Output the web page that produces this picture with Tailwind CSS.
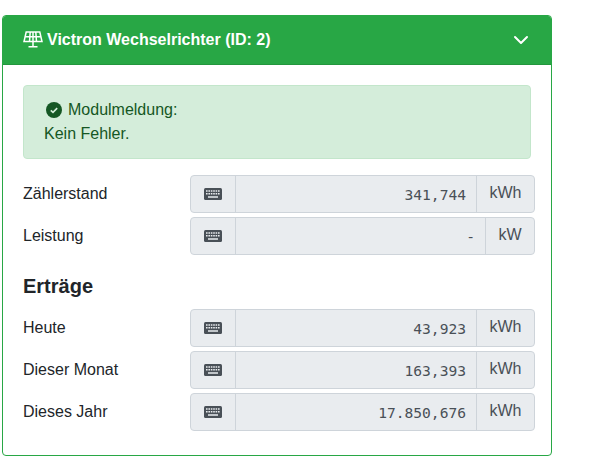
<!DOCTYPE html>
<html lang="de">
<head>
    <meta charset="UTF-8">
    <meta name="viewport" content="width=device-width, initial-scale=1.0">
    <title>Victron Wechselrichter</title>
    <script src="https://cdn.jsdelivr.net/npm/@tailwindcss/browser@4"></script>
</head>
<body class="bg-white font-['Liberation_Sans',Arial,sans-serif] text-[16px] leading-6 text-[#212529]">
    <div class="pt-[15px] pl-[2px]">
        <div class="w-[550px] h-[441px] rounded-[4px] border border-[#28a745] overflow-hidden">
            <!-- card header -->
            <div class="h-[50px] -mx-px -mt-px mb-0 bg-[#28a745] border-b border-[#23963d] flex items-center justify-between pl-[21px] pr-[23px] text-white font-bold">
                <div class="flex items-center gap-[4px]">
                    <svg class="w-[20px] h-[17px]" viewBox="0 0 20 17" fill="none" stroke="#fff" stroke-width="1.5">
                        <path d="M3.2 1h13.6l2.2 9.5H1z M2.2 5.7h15.6 M7.2 1l-.7 9.5 M12.8 1l.7 9.5 M10 1v14.5 M5.5 15.7h9" />
                    </svg>
                    <span>Victron Wechselrichter (ID: 2)</span>
                </div>
                <svg class="w-[16px] h-[16px]" viewBox="0 0 16 16" fill="none" stroke="#fff" stroke-width="2" stroke-linecap="round" stroke-linejoin="round">
                    <path d="M2 5l6 6 6-6" />
                </svg>
            </div>

            <!-- card body -->
            <div class="pt-[20px] pl-[20px] pr-[16px]">
                <div class="w-[508px] h-[74px] rounded-[4px] border border-[#c3e6cb] bg-[#d4edda] text-[#155724] pt-[12px] px-[20px] mb-[16px]">
                    <div class="flex items-center pl-[2px] gap-[6px]">
                        <svg class="w-[16px] h-[16px]" viewBox="0 0 16 16">
                            <circle cx="8" cy="8" r="8" fill="#155724" />
                            <path d="M4.8 8.3l2.2 2.1 4.2-4.3" fill="none" stroke="#d4edda" stroke-width="1.6" />
                        </svg>
                        <span>Modulmeldung:</span>
                    </div>
                    <div>Kein Fehler.</div>
                </div>

                <div class="flex flex-col gap-[4px]">
                    <div class="flex items-center h-[38px]">
                        <div class="w-[167px] pb-[1px]">Zählerstand</div>
                        <div class="w-[345px] h-[38px] flex rounded-[4px] border border-[#ced4da] bg-[#e9ecef] text-[#495057]">
                            <div class="w-[45px] border-r border-[#ced4da] flex items-center justify-center">
                                <svg class="w-[18px] h-[14px]" viewBox="0 0 18 14"><rect y="1" width="18" height="12" rx="1.5" fill="#495057" /><path d="M2 4h14M2 6.8h14" stroke="#e9ecef" stroke-width="1.5" stroke-dasharray="1.6 .8" /><path d="M4 10h10" stroke="#e9ecef" stroke-width="1.6" /></svg>
                            </div>
                            <div class="flex-1 flex items-center justify-end pr-[10px] pt-[2px] font-['DejaVu_Sans_Mono',monospace] text-[14.6px]">341,744</div>
                            <div class="w-[58px] border-l border-[#ced4da] flex items-center justify-center pb-[2px]">kWh</div>
                        </div>
                    </div>
                    <div class="flex items-center h-[38px]">
                        <div class="w-[167px] pb-[1px]">Leistung</div>
                        <div class="w-[345px] h-[38px] flex rounded-[4px] border border-[#ced4da] bg-[#e9ecef] text-[#495057]">
                            <div class="w-[45px] border-r border-[#ced4da] flex items-center justify-center">
                                <svg class="w-[18px] h-[14px]" viewBox="0 0 18 14"><rect y="1" width="18" height="12" rx="1.5" fill="#495057" /><path d="M2 4h14M2 6.8h14" stroke="#e9ecef" stroke-width="1.5" stroke-dasharray="1.6 .8" /><path d="M4 10h10" stroke="#e9ecef" stroke-width="1.6" /></svg>
                            </div>
                            <div class="flex-1 flex items-center justify-end pr-[10px] pt-[2px] font-['DejaVu_Sans_Mono',monospace] text-[14.6px]">-</div>
                            <div class="w-[49px] border-l border-[#ced4da] flex items-center justify-center pb-[2px]">kW</div>
                        </div>
                    </div>
                </div>

                <h3 class="mt-[19px] mb-[11px] text-[20px] leading-[24px] font-bold">Erträge</h3>

                <div class="flex flex-col gap-[4px]">
                    <div class="flex items-center h-[38px]">
                        <div class="w-[167px] pb-[1px]">Heute</div>
                        <div class="w-[345px] h-[38px] flex rounded-[4px] border border-[#ced4da] bg-[#e9ecef] text-[#495057]">
                            <div class="w-[45px] border-r border-[#ced4da] flex items-center justify-center">
                                <svg class="w-[18px] h-[14px]" viewBox="0 0 18 14"><rect y="1" width="18" height="12" rx="1.5" fill="#495057" /><path d="M2 4h14M2 6.8h14" stroke="#e9ecef" stroke-width="1.5" stroke-dasharray="1.6 .8" /><path d="M4 10h10" stroke="#e9ecef" stroke-width="1.6" /></svg>
                            </div>
                            <div class="flex-1 flex items-center justify-end pr-[10px] pt-[2px] font-['DejaVu_Sans_Mono',monospace] text-[14.6px]">43,923</div>
                            <div class="w-[58px] border-l border-[#ced4da] flex items-center justify-center pb-[2px]">kWh</div>
                        </div>
                    </div>
                    <div class="flex items-center h-[38px]">
                        <div class="w-[167px] pb-[1px]">Dieser Monat</div>
                        <div class="w-[345px] h-[38px] flex rounded-[4px] border border-[#ced4da] bg-[#e9ecef] text-[#495057]">
                            <div class="w-[45px] border-r border-[#ced4da] flex items-center justify-center">
                                <svg class="w-[18px] h-[14px]" viewBox="0 0 18 14"><rect y="1" width="18" height="12" rx="1.5" fill="#495057" /><path d="M2 4h14M2 6.8h14" stroke="#e9ecef" stroke-width="1.5" stroke-dasharray="1.6 .8" /><path d="M4 10h10" stroke="#e9ecef" stroke-width="1.6" /></svg>
                            </div>
                            <div class="flex-1 flex items-center justify-end pr-[10px] pt-[2px] font-['DejaVu_Sans_Mono',monospace] text-[14.6px]">163,393</div>
                            <div class="w-[58px] border-l border-[#ced4da] flex items-center justify-center pb-[2px]">kWh</div>
                        </div>
                    </div>
                    <div class="flex items-center h-[38px]">
                        <div class="w-[167px] pb-[1px]">Dieses Jahr</div>
                        <div class="w-[345px] h-[38px] flex rounded-[4px] border border-[#ced4da] bg-[#e9ecef] text-[#495057]">
                            <div class="w-[45px] border-r border-[#ced4da] flex items-center justify-center">
                                <svg class="w-[18px] h-[14px]" viewBox="0 0 18 14"><rect y="1" width="18" height="12" rx="1.5" fill="#495057" /><path d="M2 4h14M2 6.8h14" stroke="#e9ecef" stroke-width="1.5" stroke-dasharray="1.6 .8" /><path d="M4 10h10" stroke="#e9ecef" stroke-width="1.6" /></svg>
                            </div>
                            <div class="flex-1 flex items-center justify-end pr-[10px] pt-[2px] font-['DejaVu_Sans_Mono',monospace] text-[14.6px]">17.850,676</div>
                            <div class="w-[58px] border-l border-[#ced4da] flex items-center justify-center pb-[2px]">kWh</div>
                        </div>
                    </div>
                </div>
            </div>
        </div>
    </div>
</body>
</html>
